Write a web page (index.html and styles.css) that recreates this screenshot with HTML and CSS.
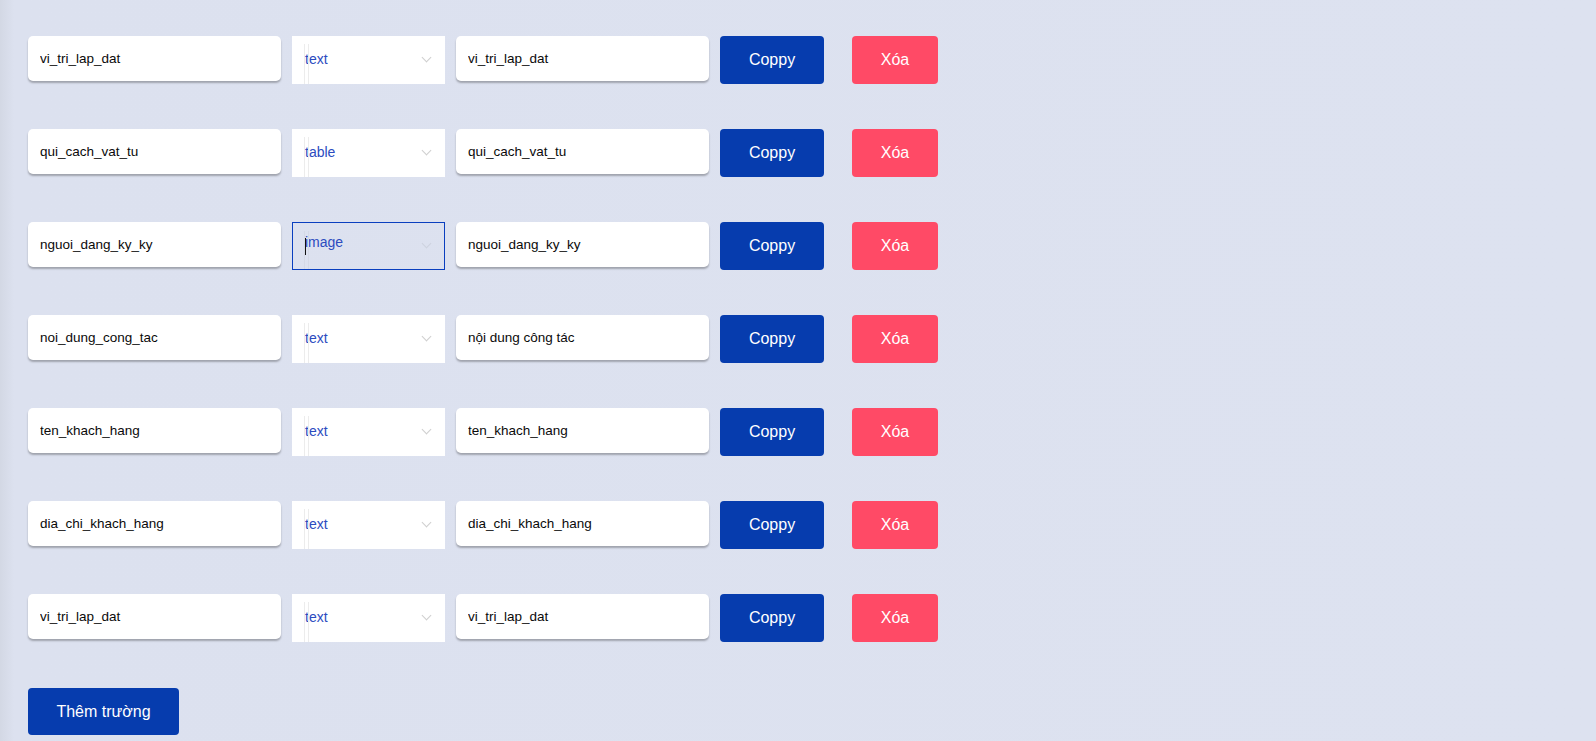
FILE: index.html
```html
<!DOCTYPE html>
<html>
<head>
  <title>Fields</title>
  <link rel="stylesheet" href="styles.css">
</head>
<body>

<div class="fields">
  <div class="field-row">
    <input class="field-input" value="vi_tri_lap_dat">
    <div class="type-select"><span class="type-value">text</span><span class="chevron"></span></div>
    <input class="field-input" value="vi_tri_lap_dat">
    <button class="btn btn-copy">Coppy</button>
    <button class="btn btn-delete">Xóa</button>
  </div>
  <div class="field-row">
    <input class="field-input" value="qui_cach_vat_tu">
    <div class="type-select"><span class="type-value">table</span><span class="chevron"></span></div>
    <input class="field-input" value="qui_cach_vat_tu">
    <button class="btn btn-copy">Coppy</button>
    <button class="btn btn-delete">Xóa</button>
  </div>
  <div class="field-row">
    <input class="field-input" value="nguoi_dang_ky_ky">
    <div class="type-select focused"><span class="caret"></span><span class="type-value">image</span><span class="chevron"></span></div>
    <input class="field-input" value="nguoi_dang_ky_ky">
    <button class="btn btn-copy">Coppy</button>
    <button class="btn btn-delete">Xóa</button>
  </div>
  <div class="field-row">
    <input class="field-input" value="noi_dung_cong_tac">
    <div class="type-select"><span class="type-value">text</span><span class="chevron"></span></div>
    <input class="field-input" value="nội dung công tác">
    <button class="btn btn-copy">Coppy</button>
    <button class="btn btn-delete">Xóa</button>
  </div>
  <div class="field-row">
    <input class="field-input" value="ten_khach_hang">
    <div class="type-select"><span class="type-value">text</span><span class="chevron"></span></div>
    <input class="field-input" value="ten_khach_hang">
    <button class="btn btn-copy">Coppy</button>
    <button class="btn btn-delete">Xóa</button>
  </div>
  <div class="field-row">
    <input class="field-input" value="dia_chi_khach_hang">
    <div class="type-select"><span class="type-value">text</span><span class="chevron"></span></div>
    <input class="field-input" value="dia_chi_khach_hang">
    <button class="btn btn-copy">Coppy</button>
    <button class="btn btn-delete">Xóa</button>
  </div>
  <div class="field-row">
    <input class="field-input" value="vi_tri_lap_dat">
    <div class="type-select"><span class="type-value">text</span><span class="chevron"></span></div>
    <input class="field-input" value="vi_tri_lap_dat">
    <button class="btn btn-copy">Coppy</button>
    <button class="btn btn-delete">Xóa</button>
  </div>
</div>

<button class="btn btn-add">Thêm trường</button>

</body>
</html>
```

FILE: styles.css
```css
html, body {
  height: 100%;
}

body {
  margin: 0;
  padding: 36px 28px 0;
  box-sizing: border-box;
  font-family: 'Liberation Sans', Arial, sans-serif;
  background: linear-gradient(90deg, #d3d8e4 0, #dce1ef 14px, #dde2f0 100%);
  overflow: hidden;
}

.fields {
  display: flex;
  flex-direction: column;
  gap: 45px;
}

.field-row {
  display: flex;
  align-items: flex-start;
}

.field-input {
  width: 253px;
  height: 45px;
  box-sizing: border-box;
  padding: 0 12px;
  border: none;
  border-radius: 5px;
  background: white;
  box-shadow: 0 2px 2px rgba(0,0,0,0.28);
  font-family: inherit;
  font-size: 13.5px;
  color: #0a0a0a;
  outline: none;
}

.type-select {
  position: relative;
  width: 153px;
  height: 48px;
  margin: 0 11px;
  box-sizing: border-box;
  background: white;
  padding: 15px 0 0 13px;
  font-size: 14px;
  color: #2c4cbf;
}

.type-select::before {
  content: "";
  position: absolute;
  left: 12px;
  top: 8px;
  bottom: 0;
  width: 3px;
  border-left: 1px solid #ececec;
  border-right: 1px solid #ececec;
}

.type-select.focused {
  background: transparent;
  border: 1px solid #0a3fbf;
  padding: 11px 0 0 12px;
}

.type-select.focused::before {
  left: 11px;
  border-color: #d4d9e6;
}

.caret {
  position: absolute;
  left: 12px;
  top: 15px;
  width: 1px;
  height: 17px;
  background: #111;
}

.chevron {
  position: absolute;
  right: 15px;
  top: 18px;
  width: 6px;
  height: 6px;
  border-right: 1px solid #cfcfcf;
  border-bottom: 1px solid #cfcfcf;
  transform: rotate(45deg);
}

.focused .chevron {
  border-color: #cdd2df;
  top: 17px;
  right: 14px;
}

.btn {
  height: 48px;
  border: none;
  border-radius: 4px;
  color: white;
  font-family: inherit;
  font-size: 16px;
  cursor: pointer;
}

.btn-copy {
  width: 104px;
  margin-left: 11px;
  background: #063cae;
}

.btn-delete {
  width: 86px;
  margin-left: 28px;
  background: #ff4a66;
}

.btn-add {
  width: 151px;
  height: 47px;
  margin-top: 46px;
  background: #063cae;
}
```
